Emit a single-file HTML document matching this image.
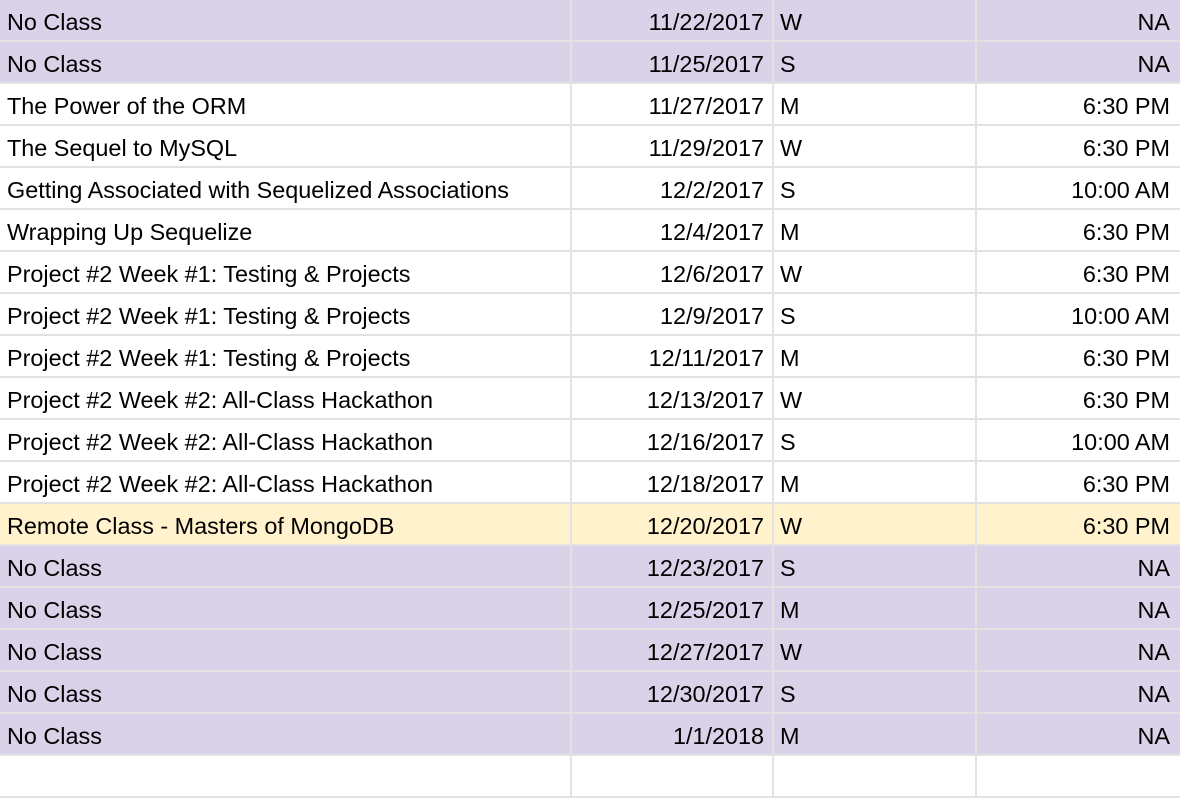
<!DOCTYPE html>
<html><head><style>
body{margin:0;width:1180px;height:760px;overflow:hidden;background:#fff;font-family:"Liberation Sans",Arial,sans-serif;font-size:23.4px;color:#000}
.r{position:relative;height:40px;border-bottom:2px solid #e2e2e2}
.r div{position:absolute;top:0;height:40px;line-height:45px;box-sizing:border-box;border-right:2px solid #e2e2e2;white-space:nowrap}
.a{left:0;width:572px;padding-left:7px}
.b{left:572px;width:202px;text-align:right;padding-right:8px}
.c{left:774px;width:203px;padding-left:6px}
.d{left:977px;width:203px;text-align:right;padding-right:10px;border-right:none!important}
.p{background:#d9d2e9}.y{background:#fff2cc}
</style></head><body>
<div class="r p"><div class="a">No Class</div><div class="b">11/22/2017</div><div class="c">W</div><div class="d">NA</div></div>
<div class="r p"><div class="a">No Class</div><div class="b">11/25/2017</div><div class="c">S</div><div class="d">NA</div></div>
<div class="r"><div class="a">The Power of the ORM</div><div class="b">11/27/2017</div><div class="c">M</div><div class="d">6:30 PM</div></div>
<div class="r"><div class="a">The Sequel to MySQL</div><div class="b">11/29/2017</div><div class="c">W</div><div class="d">6:30 PM</div></div>
<div class="r"><div class="a">Getting Associated with Sequelized Associations</div><div class="b">12/2/2017</div><div class="c">S</div><div class="d">10:00 AM</div></div>
<div class="r"><div class="a">Wrapping Up Sequelize</div><div class="b">12/4/2017</div><div class="c">M</div><div class="d">6:30 PM</div></div>
<div class="r"><div class="a">Project #2 Week #1: Testing &amp; Projects</div><div class="b">12/6/2017</div><div class="c">W</div><div class="d">6:30 PM</div></div>
<div class="r"><div class="a">Project #2 Week #1: Testing &amp; Projects</div><div class="b">12/9/2017</div><div class="c">S</div><div class="d">10:00 AM</div></div>
<div class="r"><div class="a">Project #2 Week #1: Testing &amp; Projects</div><div class="b">12/11/2017</div><div class="c">M</div><div class="d">6:30 PM</div></div>
<div class="r"><div class="a">Project #2 Week #2: All-Class Hackathon</div><div class="b">12/13/2017</div><div class="c">W</div><div class="d">6:30 PM</div></div>
<div class="r"><div class="a">Project #2 Week #2: All-Class Hackathon</div><div class="b">12/16/2017</div><div class="c">S</div><div class="d">10:00 AM</div></div>
<div class="r"><div class="a">Project #2 Week #2: All-Class Hackathon</div><div class="b">12/18/2017</div><div class="c">M</div><div class="d">6:30 PM</div></div>
<div class="r y"><div class="a">Remote Class - Masters of MongoDB</div><div class="b">12/20/2017</div><div class="c">W</div><div class="d">6:30 PM</div></div>
<div class="r p"><div class="a">No Class</div><div class="b">12/23/2017</div><div class="c">S</div><div class="d">NA</div></div>
<div class="r p"><div class="a">No Class</div><div class="b">12/25/2017</div><div class="c">M</div><div class="d">NA</div></div>
<div class="r p"><div class="a">No Class</div><div class="b">12/27/2017</div><div class="c">W</div><div class="d">NA</div></div>
<div class="r p"><div class="a">No Class</div><div class="b">12/30/2017</div><div class="c">S</div><div class="d">NA</div></div>
<div class="r p"><div class="a">No Class</div><div class="b">1/1/2018</div><div class="c">M</div><div class="d">NA</div></div>
<div class="r"><div class="a"></div><div class="b"></div><div class="c"></div><div class="d"></div></div>
</body></html>
